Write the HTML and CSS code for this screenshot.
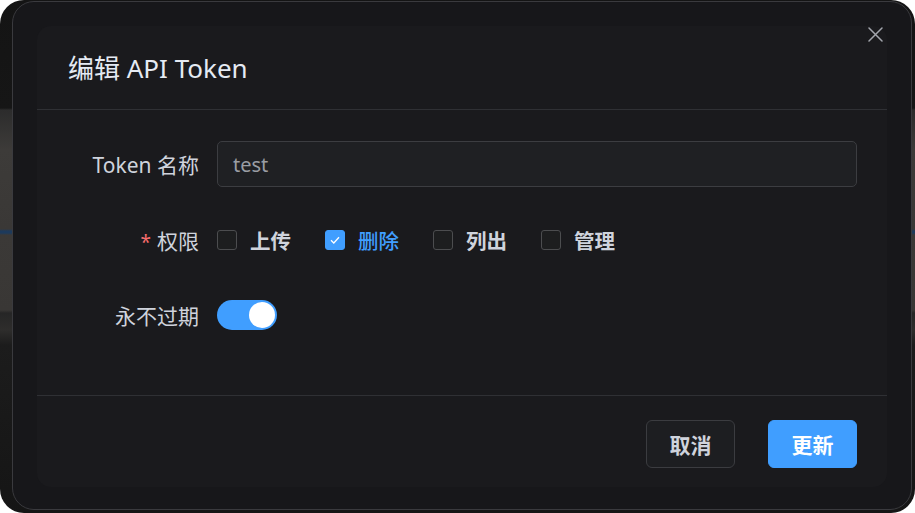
FILE: index.html
```html
<!DOCTYPE html>
<html lang="zh-CN">
<head>
<meta charset="utf-8">
<title>编辑 API Token</title>
<link rel="stylesheet" href="styles.css">
</head>
<body>
<div class="screen">
  <div class="dialog">
    <button class="close" aria-label="关闭">
      <svg viewBox="0 0 15 15" width="15" height="15"><path d="M1 1L14 14M14 1L1 14" stroke="#a3a6ad" stroke-width="1.5" fill="none" stroke-linecap="round"/></svg>
    </button>
    <div class="panel">
      <header class="hd"><h2 class="title">编辑 API Token</h2></header>
      <div class="bd">
        <div class="row">
          <label class="lbl">Token 名称</label>
          <div class="ctl"><div class="input">test</div></div>
        </div>
        <div class="row">
          <label class="lbl"><span class="req">*</span>权限</label>
          <div class="ctl">
            <span class="cb"><span class="box"></span><span class="cbl">上传</span></span>
            <span class="cb on"><span class="box"><svg viewBox="0 0 20 20" width="20" height="20"><path d="M6 10.2L8.8 13L14 7.3" stroke="#fff" stroke-width="1.3" fill="none"/></svg></span><span class="cbl">删除</span></span>
            <span class="cb"><span class="box"></span><span class="cbl">列出</span></span>
            <span class="cb"><span class="box"></span><span class="cbl">管理</span></span>
          </div>
        </div>
        <div class="row">
          <label class="lbl">永不过期</label>
          <div class="ctl"><span class="switch"><span class="knob"></span></span></div>
        </div>
      </div>
      <footer class="ft">
        <button class="btn">取消</button>
        <button class="btn primary">更新</button>
      </footer>
    </div>
  </div>
</div>
</body>
</html>
```
FILE: styles.css
```css
html, body {
  margin: 0;
  padding: 0;
  background: #ffffff;
}
body {
  font-family: "Noto Sans", "Noto Sans CJK SC", sans-serif;
}
.screen {
  width: 915px;
  height: 513px;
  box-sizing: border-box;
  padding: 1px 3px 3px 12px;
  border-radius: 24px;
  background: linear-gradient(to bottom,
    #141414 0, #161616 108px, #2c2c2c 110px, #3d3b39 150px,
    #3a3836 229px, #1d3a5c 231px, #1d3a5c 233px, #3b3937 235px,
    #393735 310px, #262626 313px, #2e2d2c 330px, #1c1c1c 345px, #151515 100%);
  overflow: hidden;
}
.dialog {
  position: relative;
  height: 100%;
  box-sizing: border-box;
  border: 1px solid #3a3a3e;
  border-radius: 22px;
  background: #17171a;
  padding: 24px 24px 22px 24px;
  display: flex;
}
.close {
  position: absolute;
  top: 25px;
  right: 28px;
  width: 15px;
  height: 15px;
  padding: 0;
  border: 0;
  background: transparent;
  display: block;
}
.close svg { display: block; }
.panel {
  flex: 1;
  display: flex;
  flex-direction: column;
  background: #1a1a1d;
  border-radius: 14px;
}
.hd {
  height: 83px;
  border-bottom: 1px solid #2f3034;
  display: flex;
  align-items: center;
  padding-left: 31px;
}
.title {
  margin: 0;
  font-size: 26px;
  font-weight: 400;
  color: #e5eaf3;
  line-height: 1;
}
.bd {
  flex: 1;
  padding: 31px 30px 0 31px;
}
.row {
  display: flex;
  align-items: center;
  height: 46px;
  margin-bottom: 29.5px;
}
.lbl {
  width: 149px;
  box-sizing: border-box;
  padding-right: 18px;
  text-align: right;
  font-size: 21px;
  color: #cfd3dc;
}
.req {
  color: #f56c6c;
  margin-right: 6px;
  font-size: 19px;
}
.ctl {
  flex: 1;
  display: flex;
  align-items: center;
}
.input {
  flex: 1;
  height: 46px;
  box-sizing: border-box;
  border: 1px solid #3c3d41;
  border-radius: 5px;
  background: #1f2023;
  padding-left: 15px;
  display: flex;
  align-items: center;
  font-size: 20px;
  color: #9a9da3;
}
.cb {
  display: flex;
  align-items: center;
  margin-right: 34px;
}
.box {
  width: 20px;
  height: 20px;
  box-sizing: border-box;
  border: 1px solid #4c4d4f;
  border-radius: 3px;
  background: #1d1e1f;
  display: block;
}
.box svg { display: block; margin: -1px; }
.cb.on .box {
  background: #409eff;
  border-color: #409eff;
}
.cbl {
  margin-left: 13px;
  font-size: 20.5px;
  font-weight: 600;
  color: #cfd3dc;
}
.cb.on .cbl { color: #409eff; font-weight: 500; }
.switch {
  width: 60px;
  height: 30px;
  border-radius: 15px;
  background: #409eff;
  display: flex;
  align-items: center;
  justify-content: flex-end;
  padding-right: 2px;
  box-sizing: border-box;
}
.knob {
  width: 26px;
  height: 26px;
  border-radius: 50%;
  background: #ffffff;
}
.ft {
  border-top: 1px solid #2f3034;
  padding: 24px 30px 19px 0;
  display: flex;
  justify-content: flex-end;
  gap: 33px;
}
.btn {
  width: 89px;
  height: 48px;
  box-sizing: border-box;
  border-radius: 6px;
  border: 1px solid #3b3c40;
  background: #1d1e21;
  color: #cfd3dc;
  font-family: "Noto Sans", "Noto Sans CJK SC", sans-serif;
  font-size: 21px;
  font-weight: 600;
  padding: 0;
}
.btn.primary {
  background: #409eff;
  border-color: #409eff;
  color: #ffffff;
}
```
